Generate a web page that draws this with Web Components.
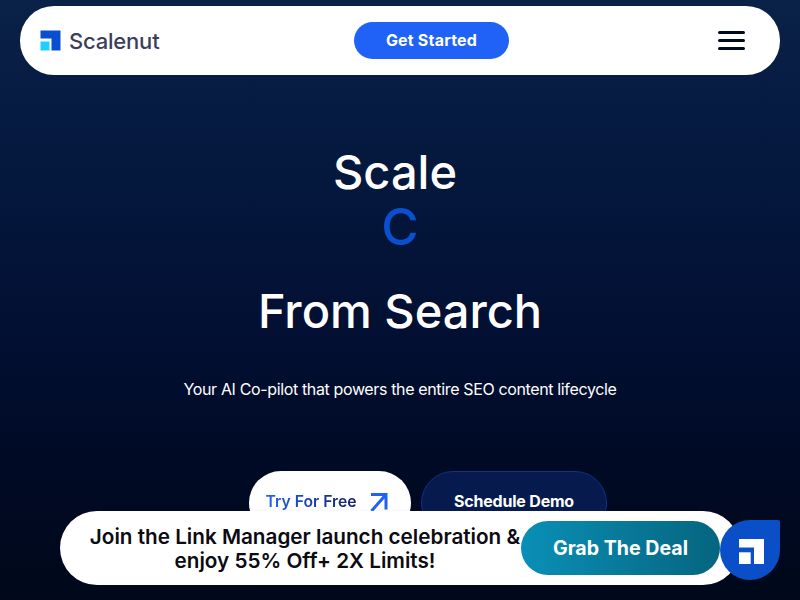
<!DOCTYPE html>
<html>
<head>
<meta charset="utf-8">
<title>Scalenut</title>
<style>
html,body { margin:0; height:100%; overflow:hidden; }
body {
  background:linear-gradient(180deg,#0a2148 0%,#05193f 25%,#020f32 57%,#000a24 78%,#00081a 100%);
  font-family:Inter,"Liberation Sans",sans-serif;
}
</style>
</head>
<body>
<top-nav></top-nav>
<hero-section>
  <span slot="first">Scale</span>
  <span slot="typed">C</span>
  <span slot="last">From Search</span>
  <span slot="sub">Your AI Co-pilot that powers the entire SEO content lifecycle</span>
</hero-section>
<deal-bar></deal-bar>
<chat-widget></chat-widget>

<script>
// 상단 네비게이션
class TopNav extends HTMLElement {
  constructor() {
    super();
    this.attachShadow({ mode: 'open' });
  }
  connectedCallback() {
    this.shadowRoot.innerHTML = `
      <style>
        :host { display:block; margin:6px 20px 0; }
        .navbar {
          display:flex; align-items:center;
          height:69px; background:#fff; border-radius:34px;
          padding:0 35px 0 20px; box-sizing:border-box;
        }
        .logo { display:flex; align-items:center; gap:8px; width:120px; flex:none; }
        .logo svg { display:block; flex:none; }
        .logo span { font-size:22px; font-weight:500; color:#3a3e5b; letter-spacing:-0.2px; line-height:24px; }
        .start {
          margin-left:194px; width:155px; height:37px; border-radius:19px;
          background:#1f62f5; color:#fff; font-size:16px; font-weight:700; letter-spacing:0.2px;
          display:flex; align-items:center; justify-content:center;
          padding-bottom:2px; box-sizing:border-box;
        }
        .hamburger { margin-left:auto; width:27px; display:flex; flex-direction:column; gap:5px; }
        .hamburger i { display:block; height:3px; border-radius:2px; background:#000a1f; }
      </style>
      <nav class="navbar">
        <div class="logo">
          <svg width="21" height="21" viewBox="0 0 21 21">
            <path d="M0.500 0.500H20.500V20.500H11.500V8.500H0.500Z" fill="#0a4fd0"/>
            <path d="M0.500 11.500H9.500V20.500H0.500Z" fill="#1cd0ff"/>
          </svg>
          <span>Scalenut</span>
        </div>
        <div class="start">Get Started</div>
        <div class="hamburger"><i></i><i></i><i></i></div>
      </nav>`;
  }
}
customElements.define('top-nav', TopNav);

// 히어로 영역
class HeroSection extends HTMLElement {
  constructor() {
    super();
    this.attachShadow({ mode: 'open' });
  }
  connectedCallback() {
    this.shadowRoot.innerHTML = `
      <style>
        :host { display:block; text-align:center; color:#fff; }
        .title { font-size:47px; font-weight:500; line-height:56px; }
        .first { margin-top:69px; padding-right:10px; }
        .typed { color:#0a4fd0; margin-top:-1px; font-size:51px; font-weight:500; }
        .last { margin-top:28px; }
        .sub { margin-top:38px; font-size:16px; line-height:24px; letter-spacing:-0.36px; }
        .actions { margin-top:70px; padding-left:56px; display:flex; justify-content:center; gap:10px; }
      </style>
      <div class="title first"><slot name="first"></slot></div>
      <div class="title typed"><slot name="typed"></slot></div>
      <div class="title last"><slot name="last"></slot></div>
      <div class="sub"><slot name="sub"></slot></div>
      <div class="actions">
        <hero-button kind="light" label="Try For Free"></hero-button>
        <hero-button kind="dark" label="Schedule Demo"></hero-button>
      </div>`;
  }
}
customElements.define('hero-section', HeroSection);

class HeroButton extends HTMLElement {
  constructor() {
    super();
    this.attachShadow({ mode: 'open' });
  }
  connectedCallback() {
    const kind = this.getAttribute('kind');
    const label = this.getAttribute('label');
    const arrow = kind === 'light'
      ? `<svg width="18" height="20" viewBox="0 0 18 20"><path d="M1 2.500H16V17.500M16 2.500L1.500 19" fill="none" stroke="#1f62f5" stroke-width="3"/></svg>`
      : '';
    this.shadowRoot.innerHTML = `
      <style>
        :host { display:block; }
        .btn {
          height:64px; box-sizing:border-box; border-radius:32px;
          display:flex; align-items:flex-start; justify-content:center;
          padding-top:21px; font-size:15.700px; font-weight:600; line-height:20px;
        }
        .light {
          width:162px; gap:14px; padding-right:6px;
          background:linear-gradient(180deg,#fff 55%,#d8d8de 100%);
          color:transparent;
        }
        .light span { background:linear-gradient(90deg,#1f62f5,#13215f); -webkit-background-clip:text; background-clip:text; }
        .dark {
          width:186px; background:#061a4d; border:1px solid #10308a;
          color:#fff; font-size:16px; font-weight:700; letter-spacing:-0.2px; padding-top:19px;
        }
      </style>
      <div class="btn ${kind}"><span>${label}</span>${arrow}</div>`;
  }
}
customElements.define('hero-button', HeroButton);

// 하단 프로모션 바
class DealBar extends HTMLElement {
  constructor() {
    super();
    this.attachShadow({ mode: 'open' });
  }
  connectedCallback() {
    this.shadowRoot.innerHTML = `
      <style>
        :host { display:block; position:fixed; left:60px; top:511px; width:680px; }
        .bar {
          display:flex; align-items:center; height:74px; box-sizing:border-box;
          background:#fff; border-radius:37px; padding-left:20px;
        }
        .text {
          width:450px; flex:none; margin-right:-9px; padding-top:1px; text-align:center; color:#0b0b12;
          font-size:20.700px; font-weight:600; line-height:24px;
        }
        .deal {
          width:199px; height:54px; border-radius:27px;
          background:linear-gradient(90deg,#0a8fb6,#05657f);
          color:#fff; font-size:19.600px; font-weight:700;
          display:flex; align-items:center; justify-content:center;
          position:relative;
        }
      </style>
      <div class="bar">
        <div class="text">Join the Link Manager launch celebration &amp;<br>enjoy 55% Off+ 2X Limits!</div>
        <div class="deal">Grab The Deal</div>
      </div>`;
  }
}
customElements.define('deal-bar', DealBar);

class ChatWidget extends HTMLElement {
  constructor() {
    super();
    this.attachShadow({ mode: 'open' });
  }
  connectedCallback() {
    this.shadowRoot.innerHTML = `
      <style>
        :host { display:block; position:fixed; left:720px; top:520px; width:60px; height:60px; }
        .drop {
          width:60px; height:60px; background:#0a4fc8;
          border-radius:30px 2px 30px 30px;
          display:flex; align-items:center; justify-content:center;
          padding:3px 0 0 3px; box-sizing:border-box;
        }
        svg { display:block; }
      </style>
      <div class="drop">
        <svg width="25" height="25" viewBox="0 0 25 25">
          <path d="M0 0H25V25H15V8.500H0Z" fill="#fff"/>
          <path d="M0 13.300H11.700V25H0Z" fill="#fff"/>
        </svg>
      </div>`;
  }
}
customElements.define('chat-widget', ChatWidget);
</script>
</body>
</html>
